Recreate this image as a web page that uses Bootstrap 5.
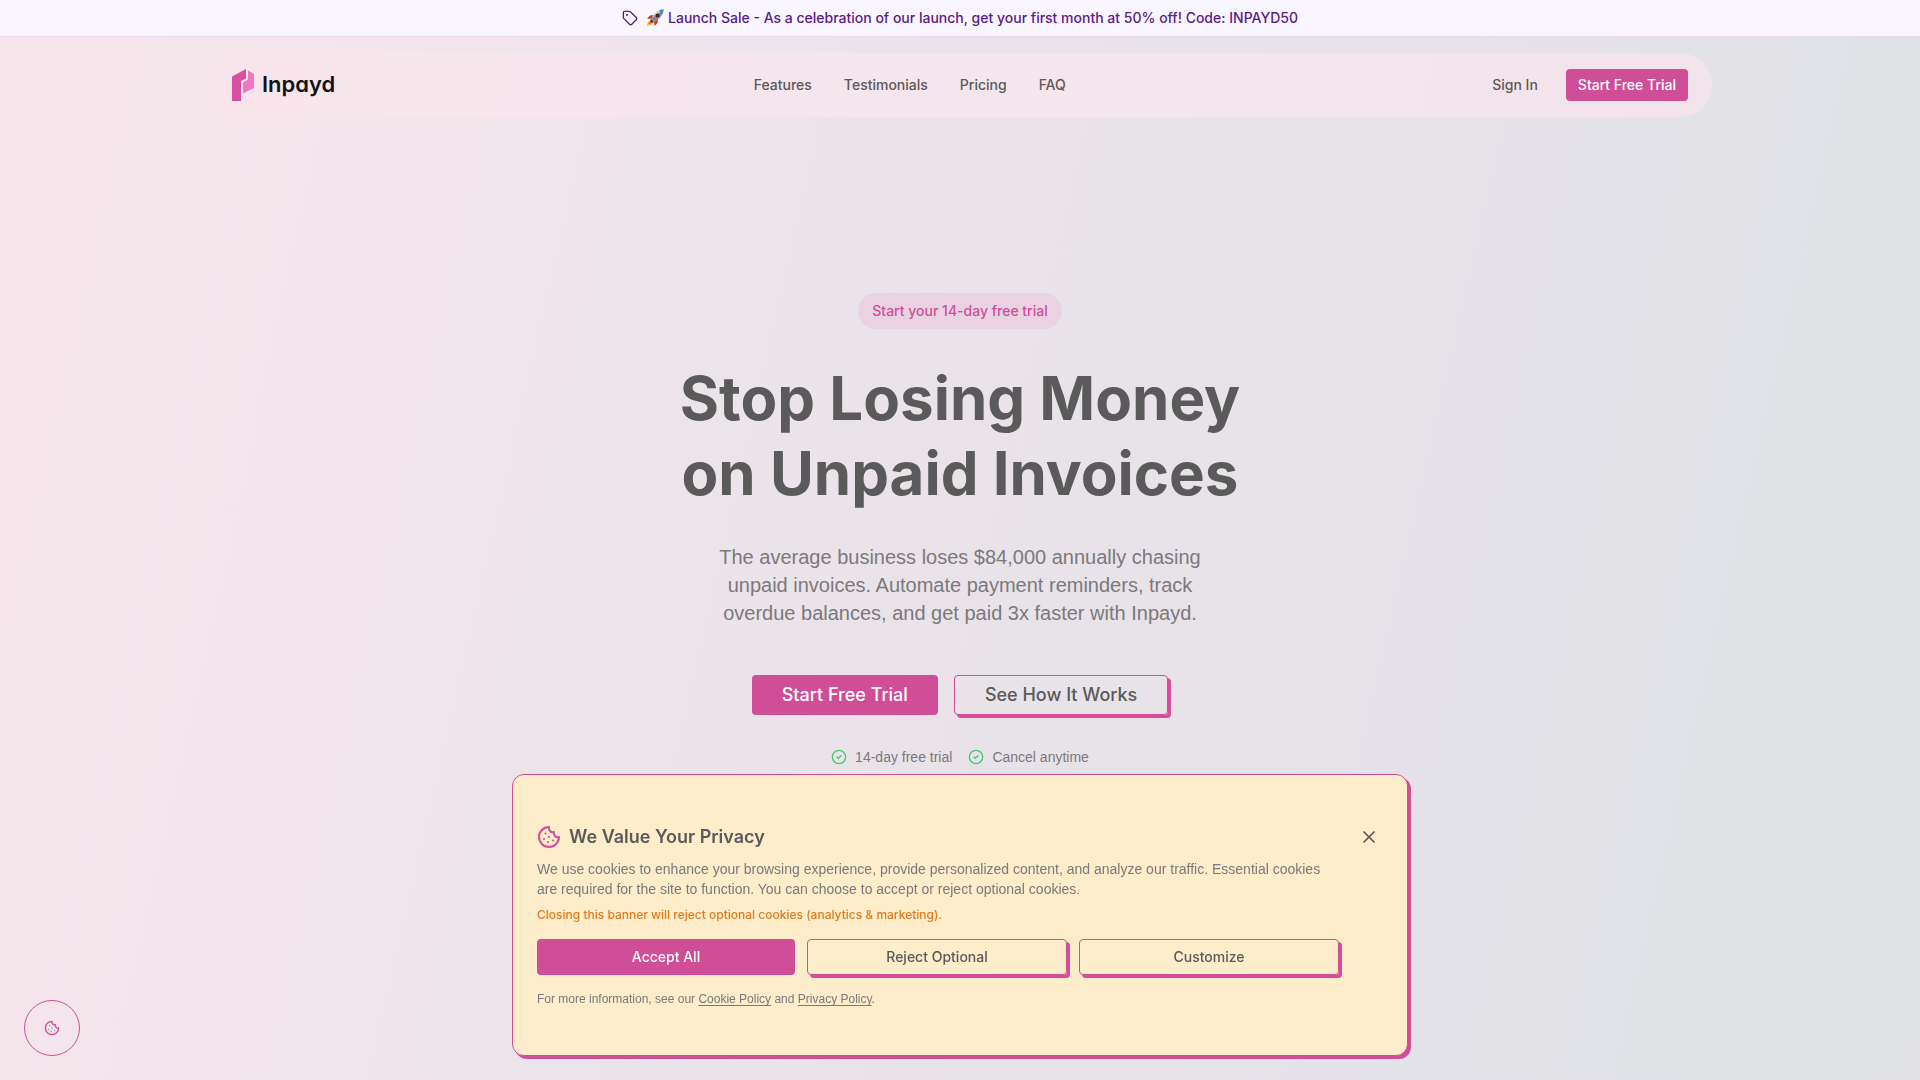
<!DOCTYPE html>
<html lang="en">
<head>
<meta charset="utf-8">
<meta name="viewport" content="width=device-width, initial-scale=1">
<title>Inpayd - Stop Losing Money on Unpaid Invoices</title>
<link href="https://cdn.jsdelivr.net/npm/bootstrap@5.3.0/dist/css/bootstrap.min.css" rel="stylesheet">
<style>
:root { --brand: #d04e98; --shade: #dc4a9e; --ink: #5a5a5a; --soft: #7b797c; }
body { font-family: Inter, "Liberation Sans", sans-serif; font-size: 14px; line-height: 20px; color: var(--ink); min-height: 100vh;
  background: linear-gradient(103deg, #f6e6ec 0%, #f4e5eb 12%, #ebe4ea 38%, #e8e3e9 58%, #e3e2e8 78%, #e0e2e6 92%, #e2e2e6 100%) fixed; }
.promo { background: #faf6ff; border-bottom: 1px solid #ead6fb; color: #581c87; padding: 8px 0; line-height: 20px; }
.site-nav { width: calc(100% - 32px); max-width: 1504px; height: 64px; padding: 0 24px; border-radius: 32px; background: rgba(250,230,237,.7); }
.logo-text { font-size: 22px; line-height: 32px; font-weight: 600; color: #131313; font-feature-settings: "cv11"; padding-bottom: 2px; }
.site-nav a { color: var(--ink); text-decoration: none; }
.nav-links { gap: 32px; }
.btn { --bs-btn-border-radius: 4px; font-size: 14px; line-height: 20px; font-weight: 500; }
.btn-brand { --bs-btn-color: #fff; --bs-btn-bg: var(--brand); --bs-btn-hover-color: #fff; --bs-btn-hover-bg: #bd4088; --bs-btn-active-color: #fff; --bs-btn-active-bg: #bd4088; border: 0; }
.btn-raised { --bs-btn-color: var(--ink); --bs-btn-hover-color: var(--brand); border: 1px solid var(--brand); box-shadow: 3px 3px 0 var(--shade); }
.site-nav .btn-brand { color: #fff; padding: 6px 12px; }
.hero { padding: 176px 16px 0; }
.trial-pill { background: #e9d3e2; color: #d14e9b; padding: 8px 14px; border-radius: 18px; }
.hero h1 { font-size: 60px; line-height: 75px; font-weight: 700; margin: 32px 0; }
.hero-copy, .perks, .cookie-copy, .cookie-more { font-family: "Liberation Sans", Arial, sans-serif; color: var(--soft); }
.hero-copy { font-size: 20px; line-height: 28px; max-width: 512px; margin-bottom: 48px; }
.hero .btn { font-size: 18px; height: 40px; padding: 0 30px; }
.perks { margin-top: 32px; }
.perks svg { color: #3fc96f; }
.cookie-card { bottom: 24px; z-index: 10; width: calc(100% - 32px); max-width: 896px; background: #fdedca; border: 1px solid var(--brand); border-radius: 12px; box-shadow: 3px 3px 0 var(--brand); padding: 48px 24px; }
.cookie-card h2 { font-size: 18px; line-height: 28px; font-weight: 600; margin: 0; }
.cookie-copy { margin: 8px 0; }
.cookie-note { color: #e27b1f; font-size: 12px; line-height: 16px; margin-bottom: 16px; }
.choices { gap: 12px; }
.cookie-card .choice { flex: 1 1 0; height: 36px; padding: 0 12px; }
.cookie-more { font-size: 12px; line-height: 16px; margin: 16px 0 0; }
.cookie-more a { color: inherit; text-underline-offset: 2px; }
.close-btn { width: 28px; height: 28px; color: #555; }
.cookie-fab { left: 24px; bottom: 24px; width: 56px; height: 56px; border: 1px solid var(--brand); color: var(--brand); background: transparent; }
.pinkish { color: var(--brand); }
</style>
<script src="https://cdn.jsdelivr.net/npm/bootstrap@5.3.0/dist/js/bootstrap.bundle.min.js"></script>
</head>
<body>
<svg class="d-none" aria-hidden="true">
  <symbol id="cookie" viewBox="0 0 24 24" fill="none" stroke="currentColor" stroke-width="2" stroke-linecap="round" stroke-linejoin="round"><path d="M12 2a10 10 0 1 0 10 10 4 4 0 0 1-5-5 4 4 0 0 1-5-5"/><path d="M8.5 8.5v.01M16 15.500v.01M12 12v.01M11 17v.01M7 14v.01"/></symbol>
  <symbol id="tick" viewBox="0 0 24 24" fill="none" stroke="currentColor" stroke-width="2" stroke-linecap="round" stroke-linejoin="round"><circle cx="12" cy="12" r="10"/><path d="m9 12 2 2 4-4"/></symbol>
</svg>

<div class="promo d-flex justify-content-center align-items-center gap-2 fw-medium">
  <svg width="16" height="16" viewBox="0 0 24 24" fill="none" stroke="currentColor" stroke-width="2" stroke-linecap="round" stroke-linejoin="round"><path d="M12.586 2.586A2 2 0 0 0 11.172 2H4a2 2 0 0 0-2 2v7.172a2 2 0 0 0 .586 1.414l8.704 8.704a2.426 2.426 0 0 0 3.420 0l6.580-6.580a2.426 2.426 0 0 0 0-3.420z"/><circle cx="7.500" cy="7.500" r=".5" fill="currentColor"/></svg>
  <span class="d-flex align-items-center gap-1">
    <svg width="18" height="18" viewBox="0 0 18 18"><path d="M5 10 1 9.500 4 6.500 8 6zM8 13l.5 4 3-3 .5-4z" fill="#d9381e"/><path d="M1 17q0-4 3.500-5l2 2Q5 17 1 17z" fill="#fbc02d"/><path d="M2 14.500q1-2 3-2.500l1 1Q5 15.500 2 14.500z" fill="#f4511e"/><path d="M17.500.5Q10 .5 5 10l3 3q9.500-5 9.500-12.500z" fill="#7d8b96"/><path d="M17.500.5Q13 .5 9.500 3.500L6 9z" fill="#c9d6df"/><path d="M17.500.5q-2.500 0-4.500 1l3.500 3.500q1-2 1-4.500z" fill="#3d8fc8"/><circle cx="11.500" cy="6.500" r="2" fill="#46222a"/><path d="m5 10 3 3-2 1-2-2z" fill="#5b3030"/></svg>
    <span>Launch Sale - As a celebration of our launch, get your first month at 50% off! Code: INPAYD50</span>
  </span>
</div>

<header class="site-nav d-flex justify-content-between align-items-center mx-auto mt-3">
  <a href="#" class="d-flex align-items-center gap-2">
    <svg width="22" height="32" viewBox="0 0 22 32"><path d="M0 7.500 14 0v9.500L9 12v20H0z" fill="#d6509f"/><path d="m16 1.500 6 3.500v14l-11 5.500V13.500l5-3z" fill="#ec79c5"/></svg>
    <span class="logo-text">Inpayd</span>
  </a>
  <nav class="nav-links d-flex fw-medium">
    <a href="#features">Features</a><a href="#testimonials">Testimonials</a><a href="#pricing">Pricing</a><a href="#faq">FAQ</a>
  </nav>
  <div class="d-flex align-items-center gap-3">
    <a href="#signin" class="fw-medium px-2 me-1">Sign In</a>
    <a href="#start" class="btn btn-brand">Start Free Trial</a>
  </div>
</header>

<main class="hero d-flex flex-column align-items-center text-center">
  <div class="trial-pill fw-medium">Start your 14-day free trial</div>
  <h1>Stop Losing Money<br>on Unpaid Invoices</h1>
  <p class="hero-copy">The average business loses $84,000 annually chasing unpaid invoices. Automate payment reminders, track overdue balances, and get paid 3x faster with Inpayd.</p>
  <div class="d-flex gap-3">
    <button type="button" class="btn btn-brand">Start Free Trial</button>
    <button type="button" class="btn btn-raised">See How It Works</button>
  </div>
  <div class="perks d-flex gap-3">
    <span class="d-flex align-items-center gap-2"><svg width="16" height="16"><use href="#tick"/></svg>14-day free trial</span>
    <span class="d-flex align-items-center gap-2"><svg width="16" height="16"><use href="#tick"/></svg>Cancel anytime</span>
  </div>
</main>

<section class="cookie-card position-fixed start-50 translate-middle-x d-flex gap-3" aria-labelledby="privacy-title">
  <div class="flex-grow-1">
    <div class="d-flex align-items-center gap-2">
      <svg class="pinkish" width="24" height="24"><use href="#cookie"/></svg>
      <h2 id="privacy-title">We Value Your Privacy</h2>
    </div>
    <p class="cookie-copy">We use cookies to enhance your browsing experience, provide personalized content, and analyze our traffic. Essential cookies are required for the site to function. You can choose to accept or reject optional cookies.</p>
    <p class="cookie-note fw-medium">Closing this banner will reject optional cookies (analytics &amp; marketing).</p>
    <div class="choices d-flex">
      <button type="button" class="btn btn-brand choice">Accept All</button>
      <button type="button" class="btn btn-raised choice">Reject Optional</button>
      <button type="button" class="btn btn-raised choice">Customize</button>
    </div>
    <p class="cookie-more">For more information, see our <a href="#cookies">Cookie Policy</a> and <a href="#privacy">Privacy Policy</a>.</p>
  </div>
  <button type="button" class="close-btn btn p-0 border-0 d-flex flex-shrink-0 align-items-center justify-content-center" aria-label="Close">
    <svg width="20" height="20" viewBox="0 0 24 24" fill="none" stroke="currentColor" stroke-width="2" stroke-linecap="round"><path d="M18 6 6 18M6 6l12 12"/></svg>
  </button>
</section>

<button type="button" class="cookie-fab position-fixed rounded-circle d-flex align-items-center justify-content-center" aria-label="Cookie settings">
  <svg width="16" height="16"><use href="#cookie"/></svg>
</button>
</body>
</html>
